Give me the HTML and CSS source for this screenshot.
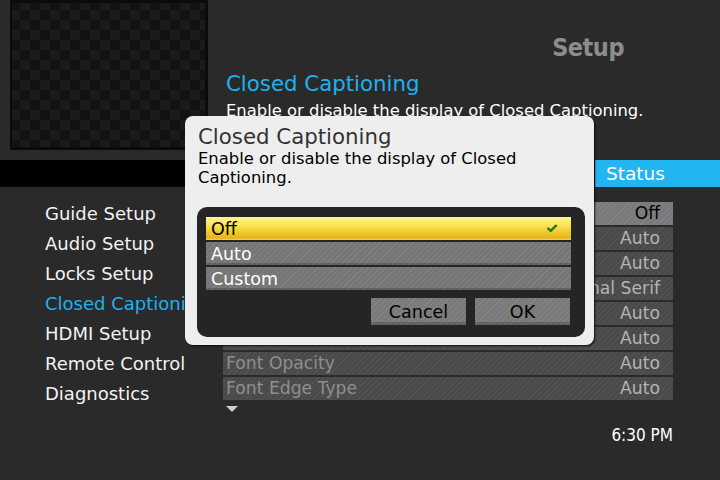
FILE: index.html
```html
<!DOCTYPE html>
<html>
<head>
<meta charset="utf-8">
<link rel="stylesheet" href="styles.css">
</head>
<body>
<div class="screen">
  <div class="top">
    <div class="preview"></div>
    <div class="heading">
      <div class="brand">Setup</div>
      <div class="title">Closed Captioning</div>
      <div class="subtitle">Enable or disable the display of Closed Captioning.</div>
    </div>
  </div>
  <div class="bar">
    <div class="bar-left"></div>
    <div class="bar-status">Status</div>
  </div>
  <div class="content">
    <ul class="menu">
      <li>Guide Setup</li>
      <li>Audio Setup</li>
      <li>Locks Setup</li>
      <li class="active">Closed Captioning</li>
      <li>HDMI Setup</li>
      <li>Remote Control</li>
      <li>Diagnostics</li>
    </ul>
    <div class="list-col">
      <ul class="list">
        <li class="row focus"><span>Closed Captioning</span><span>Off</span></li>
        <li class="row"><span>Analog Caption Service</span><span>Auto</span></li>
        <li class="row"><span>Digital Caption Service</span><span>Auto</span></li>
        <li class="row"><span>Font Style</span><span>Proportional Serif</span></li>
        <li class="row"><span>Font Size</span><span>Auto</span></li>
        <li class="row"><span>Font Color</span><span>Auto</span></li>
        <li class="row"><span>Font Opacity</span><span>Auto</span></li>
        <li class="row"><span>Font Edge Type</span><span>Auto</span></li>
      </ul>
      <div class="more"></div>
      <div class="clock">6:30 PM</div>
    </div>
  </div>

  <div class="dialog">
    <div class="dlg-title">Closed Captioning</div>
    <div class="dlg-desc">Enable or disable the display of Closed Captioning.</div>
    <div class="dlg-box">
      <ul class="options">
        <li class="opt selected"><span>Off</span>
          <svg class="check" width="12" height="9" viewBox="0 0 12 9"><path d="M0.6 4.8 L2.6 3.3 L4.6 5.3 L9.7 0.3 L11.6 1.7 L4.7 8.4 Z" fill="#1d7a16"/></svg>
        </li>
        <li class="opt">Auto</li>
        <li class="opt">Custom</li>
      </ul>
      <div class="buttons">
        <div class="btn">Cancel</div>
        <div class="btn">OK</div>
      </div>
    </div>
  </div>
</div>
</body>
</html>
```
FILE: styles.css
```css
* { box-sizing: border-box; }
html, body { margin: 0; padding: 0; }
body {
  background: #2a2a2a;
  font-family: "DejaVu Sans", sans-serif;
  color: #fff;
}
ul { list-style: none; margin: 0; padding: 0; }
.screen {
  position: relative;
  width: 720px;
  height: 480px;
  overflow: hidden;
  background: #2a2a2a;
}
.top {
  display: flex;
  height: 160px;
}
.preview {
  margin-left: 10px;
  width: 198px;
  height: 150px;
  border: 3px solid #0b0b0b;
  border-left-width: 2px;
  background-color: #121212;
  background-image:
    linear-gradient(45deg, #1b1b1b 25%, transparent 25%, transparent 75%, #1b1b1b 75%),
    linear-gradient(45deg, #1b1b1b 25%, transparent 25%, transparent 75%, #1b1b1b 75%);
  background-size: 20px 20px;
  background-position: -2px -3px, 8px 7px;
}
.heading {
  flex: 1;
  padding-left: 18px;
}
.brand {
  text-align: right;
  padding-right: 96px;
  padding-top: 33px;
  height: 70px;
  font-family: "DejaVu Sans Condensed", "DejaVu Sans", sans-serif;
  font-stretch: condensed;
  font-weight: bold;
  font-size: 25px;
  letter-spacing: -0.5px;
  color: #8c8c8c;
  line-height: 30px;
}
.title {
  color: #1fb1ee;
  font-size: 21.3px;
  line-height: 28px;
}
.subtitle {
  color: #fff;
  font-size: 16.4px;
  line-height: 22px;
  margin-top: 2px;
  white-space: nowrap;
}
.bar {
  display: flex;
  height: 27px;
}
.bar-left {
  width: 595px;
  background: #000;
}
.bar-status {
  flex: 1;
  background: #21b6f2;
  color: #fff;
  font-size: 18.5px;
  line-height: 27px;
  padding-left: 11px;
}
.content {
  display: flex;
}
.menu {
  width: 223px;
  padding-left: 45px;
  padding-top: 12px;
  white-space: nowrap;
}
.menu li {
  height: 30px;
  line-height: 30px;
  font-size: 18px;
  color: #f2f2f2;
}
.menu li.active { color: #1fb1ee; }
.list-col {
  width: 450px;
  padding-top: 15px;
}
.row {
  display: flex;
  justify-content: space-between;
  height: 23px;
  margin-bottom: 2px;
  padding: 0 13px 0 3px;
  line-height: 23px;
  font-size: 17.2px;
  white-space: nowrap;
  color: #8e8e8e;
  background: repeating-linear-gradient(135deg, #4a4a4a 0 3px, #535353 3px 4px);
}
.row span:last-child { color: #b4b4b4; }
.row.focus {
  background: repeating-linear-gradient(135deg, #7a7a7a 0 3px, #838383 3px 4px);
  color: #000;
}
.row.focus span:last-child { color: #000; }
.more {
  margin: 6px 0 0 3px;
  width: 0;
  height: 0;
  border-left: 6px solid transparent;
  border-right: 6px solid transparent;
  border-top: 6px solid #cfcfcf;
}
.clock {
  text-align: right;
  font-family: "DejaVu Sans Condensed", "DejaVu Sans", sans-serif;
  font-stretch: condensed;
  font-size: 17px;
  line-height: 20px;
  margin-top: 13px;
  padding-right: 0;
  color: #fff;
}
.dialog {
  position: absolute;
  left: 185px;
  top: 116px;
  width: 409px;
  height: 229px;
  background: #eeeeee;
  border-radius: 8px;
  box-shadow: 1px 1px 2px rgba(0,0,0,0.8);
  padding: 7px 9px 0 12px;
  color: #000;
}
.dlg-title {
  font-size: 21.3px;
  line-height: 27px;
  color: #333;
  padding-left: 1px;
}
.dlg-desc {
  font-size: 16.4px;
  line-height: 18.5px;
  padding-left: 1px;
  padding-right: 40px;
}
.dlg-box {
  margin-top: 20px;
  height: 130px;
  background: #252525;
  border-radius: 10px;
  padding: 10px 14px 0 9px;
}
.options li {
  height: 23px;
  margin-bottom: 2px;
  line-height: 24px;
  font-size: 17.5px;
  padding-left: 5px;
  color: #fff;
  background: repeating-linear-gradient(135deg, #767676 0 3px, #808080 3px 4px);
  box-shadow: inset 0 -2px 0 rgba(0,0,0,0.18);
}
.options li.selected {
  display: flex;
  justify-content: space-between;
  align-items: center;
  padding-right: 13px;
  color: #000;
  background: linear-gradient(#fff690 0%, #fbe35a 35%, #f0c628 70%, #e4b41c 92%, #f6d660 100%);
  box-shadow: none;
}
.buttons {
  display: flex;
  justify-content: flex-end;
  gap: 9px;
  margin-top: 8px;
  padding-right: 1px;
}
.btn {
  width: 95px;
  height: 27px;
  line-height: 29px;
  text-align: center;
  font-size: 17.5px;
  color: #000;
  background: repeating-linear-gradient(135deg, #7a7a7a 0 3px, #848484 3px 4px);
  box-shadow: inset 0 -3px 0 rgba(0,0,0,0.2);
}
```
